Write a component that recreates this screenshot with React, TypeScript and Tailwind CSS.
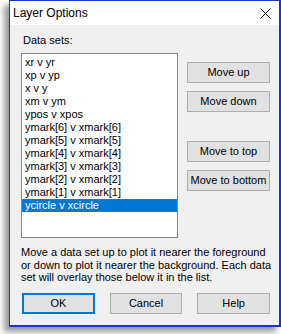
import { useState } from 'react';

const dataSets = [
  'xr v yr',
  'xp v yp',
  'x v y',
  'xm v ym',
  'ypos v xpos',
  'ymark[6] v xmark[6]',
  'ymark[5] v xmark[5]',
  'ymark[4] v xmark[4]',
  'ymark[3] v xmark[3]',
  'ymark[2] v xmark[2]',
  'ymark[1] v xmark[1]',
  'ycircle v xcircle',
];

function SideButton({ label }: { label: string }) {
  return (
    <button className="w-[83px] h-[21px] bg-[#e1e1e1] border border-[#adadad] text-[11px] leading-none text-black whitespace-nowrap">
      {label}
    </button>
  );
}

function DialogButton({ label, isDefault }: { label: string; isDefault?: boolean }) {
  return (
    <button
      className={
        isDefault
          ? 'w-[73px] h-[21px] bg-[#e1e1e1] border-2 border-[#0078d7] text-[11px] leading-none text-black'
          : 'w-[73px] h-[21px] bg-[#e1e1e1] border border-[#adadad] text-[11px] leading-none text-black'
      }
    >
      {label}
    </button>
  );
}

export default function App() {
  const [selected, setSelected] = useState(11);

  return (
    <div className="w-[281px] h-[334px] bg-white overflow-hidden font-['Liberation_Sans',Arial,sans-serif]">
      <div className="ml-[9px] w-[272px] h-[327px] flex flex-col border-t border-l border-r-2 border-b-2 border-[#1a33c9] shadow-[-5px_5px_6px_rgba(0,0,0,0.4)]">
        {/* title bar */}
        <div className="h-[24px] bg-white flex items-center justify-between pl-[3px] pr-[6px]">
          <span className="text-[12px] text-black">Layer Options</span>
          <svg width="11" height="11" viewBox="0 0 11 11" className="mr-[2px]">
            <path d="M0.5 0.5 L10.5 10.5 M10.5 0.5 L0.5 10.5" stroke="#000" strokeWidth="1" />
          </svg>
        </div>

        {/* body */}
        <div className="flex-1 bg-[#f0f0f0] pl-[11px] pr-[9px] pt-[8px] flex flex-col">
          <div className="text-[11px] leading-[15px] pl-[2px] text-black">Data sets:</div>

          <div className="flex mt-[5px]">
            <div className="w-[158px] h-[185px] bg-white border border-[#828790] pt-[2px]">
              {dataSets.map((name, i) => (
                <div
                  key={name}
                  onClick={() => setSelected(i)}
                  className={
                    i === selected
                      ? 'h-[13px] leading-[13px] pl-[3px] text-[11px] bg-[#0078d7] text-white whitespace-nowrap'
                      : 'h-[13px] leading-[13px] pl-[3px] text-[11px] text-black whitespace-nowrap'
                  }
                >
                  {name}
                </div>
              ))}
            </div>

            <div className="ml-[9px] pt-[9px] flex flex-col">
              <SideButton label="Move up" />
              <div className="h-[8px]" />
              <SideButton label="Move down" />
              <div className="h-[29px]" />
              <SideButton label="Move to top" />
              <div className="h-[8px]" />
              <SideButton label="Move to bottom" />
            </div>
          </div>

          <div className="mt-[8px] text-[11px] leading-[12.5px] text-black whitespace-nowrap">
            Move a data set up to plot it nearer the foreground
            <br />
            or down to plot it nearer the background. Each data
            <br />
            set will overlay those below it in the list.
          </div>

          <div className="mt-[9px] flex pl-[1px] gap-[15px]">
            <DialogButton label="OK" isDefault />
            <DialogButton label="Cancel" />
            <DialogButton label="Help" />
          </div>
        </div>
      </div>
    </div>
  );
}
